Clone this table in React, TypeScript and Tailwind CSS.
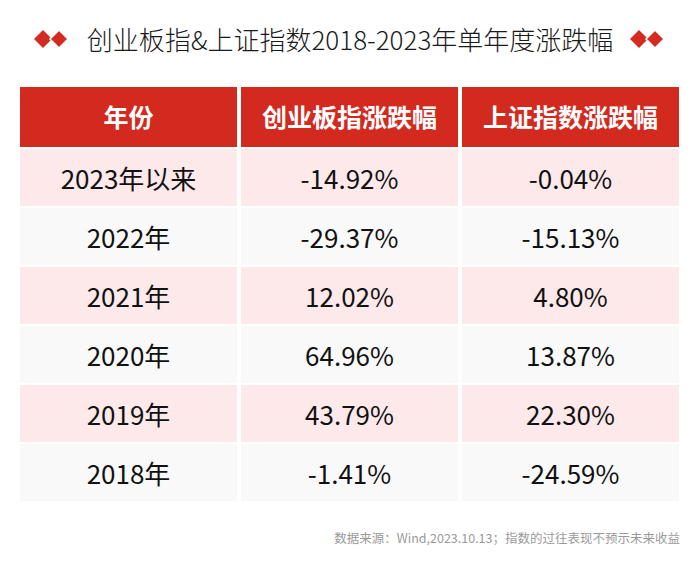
const rows = [
  { year: '2023年以来', cyb: '-14.92%', sz: '-0.04%' },
  { year: '2022年', cyb: '-29.37%', sz: '-15.13%' },
  { year: '2021年', cyb: '12.02%', sz: '4.80%' },
  { year: '2020年', cyb: '64.96%', sz: '13.87%' },
  { year: '2019年', cyb: '43.79%', sz: '22.30%' },
  { year: '2018年', cyb: '-1.41%', sz: '-24.59%' },
]

const Diamonds = () => (
  <svg width="36" height="18" viewBox="0 0 36 18">
    <polygon points="9,0 18,9 9,18 0,9" fill="#d32a22" />
    <polygon points="25,0 34,9 25,18 16,9" fill="#d32a22" stroke="#ffffff" strokeWidth="1.5" />
  </svg>
)

export default function App() {
  return (
    <div
      className="w-[700px] h-[565px] bg-white text-[#111]"
      style={{ fontFamily: '"Noto Sans CJK SC", "Noto Sans", sans-serif' }}
    >
      <div className="h-[87px] flex items-start justify-center pt-[21px] gap-[17px]">
        <div className="pt-[9px]">
          <Diamonds />
        </div>
        <h1 className="text-[26px] leading-[36px] font-light text-[#1a1a1a]">
          创业板指&上证指数2018-2023年单年度涨跌幅
        </h1>
        <div className="pt-[9px]">
          <Diamonds />
        </div>
      </div>
      <div className="ml-[20px] w-[659px] grid grid-cols-3 gap-x-[4px] gap-y-[2px]">
        {['年份', '创业板指涨跌幅', '上证指数涨跌幅'].map((h) => (
          <div
            key={h}
            className="h-[60px] bg-[#d32a20] text-white font-bold text-[25px] flex items-center justify-center"
          >
            {h}
          </div>
        ))}
        {rows.map((r, i) => {
          const bg = i % 2 === 0 ? 'bg-[#fde9ea]' : 'bg-[#f9f9fa]'
          return [r.year, r.cyb, r.sz].map((c, j) => (
            <div
              key={`${i}-${j}`}
              className={`h-[57px] ${bg} text-[26px] flex items-center justify-center`}
            >
              {c}
            </div>
          ))
        })}
      </div>
      <div className="mt-[28px] pr-[20px] text-right text-[12.5px] text-[#9a9a9a]">
        数据来源：Wind,2023.10.13；指数的过往表现不预示未来收益
      </div>
    </div>
  )
}
